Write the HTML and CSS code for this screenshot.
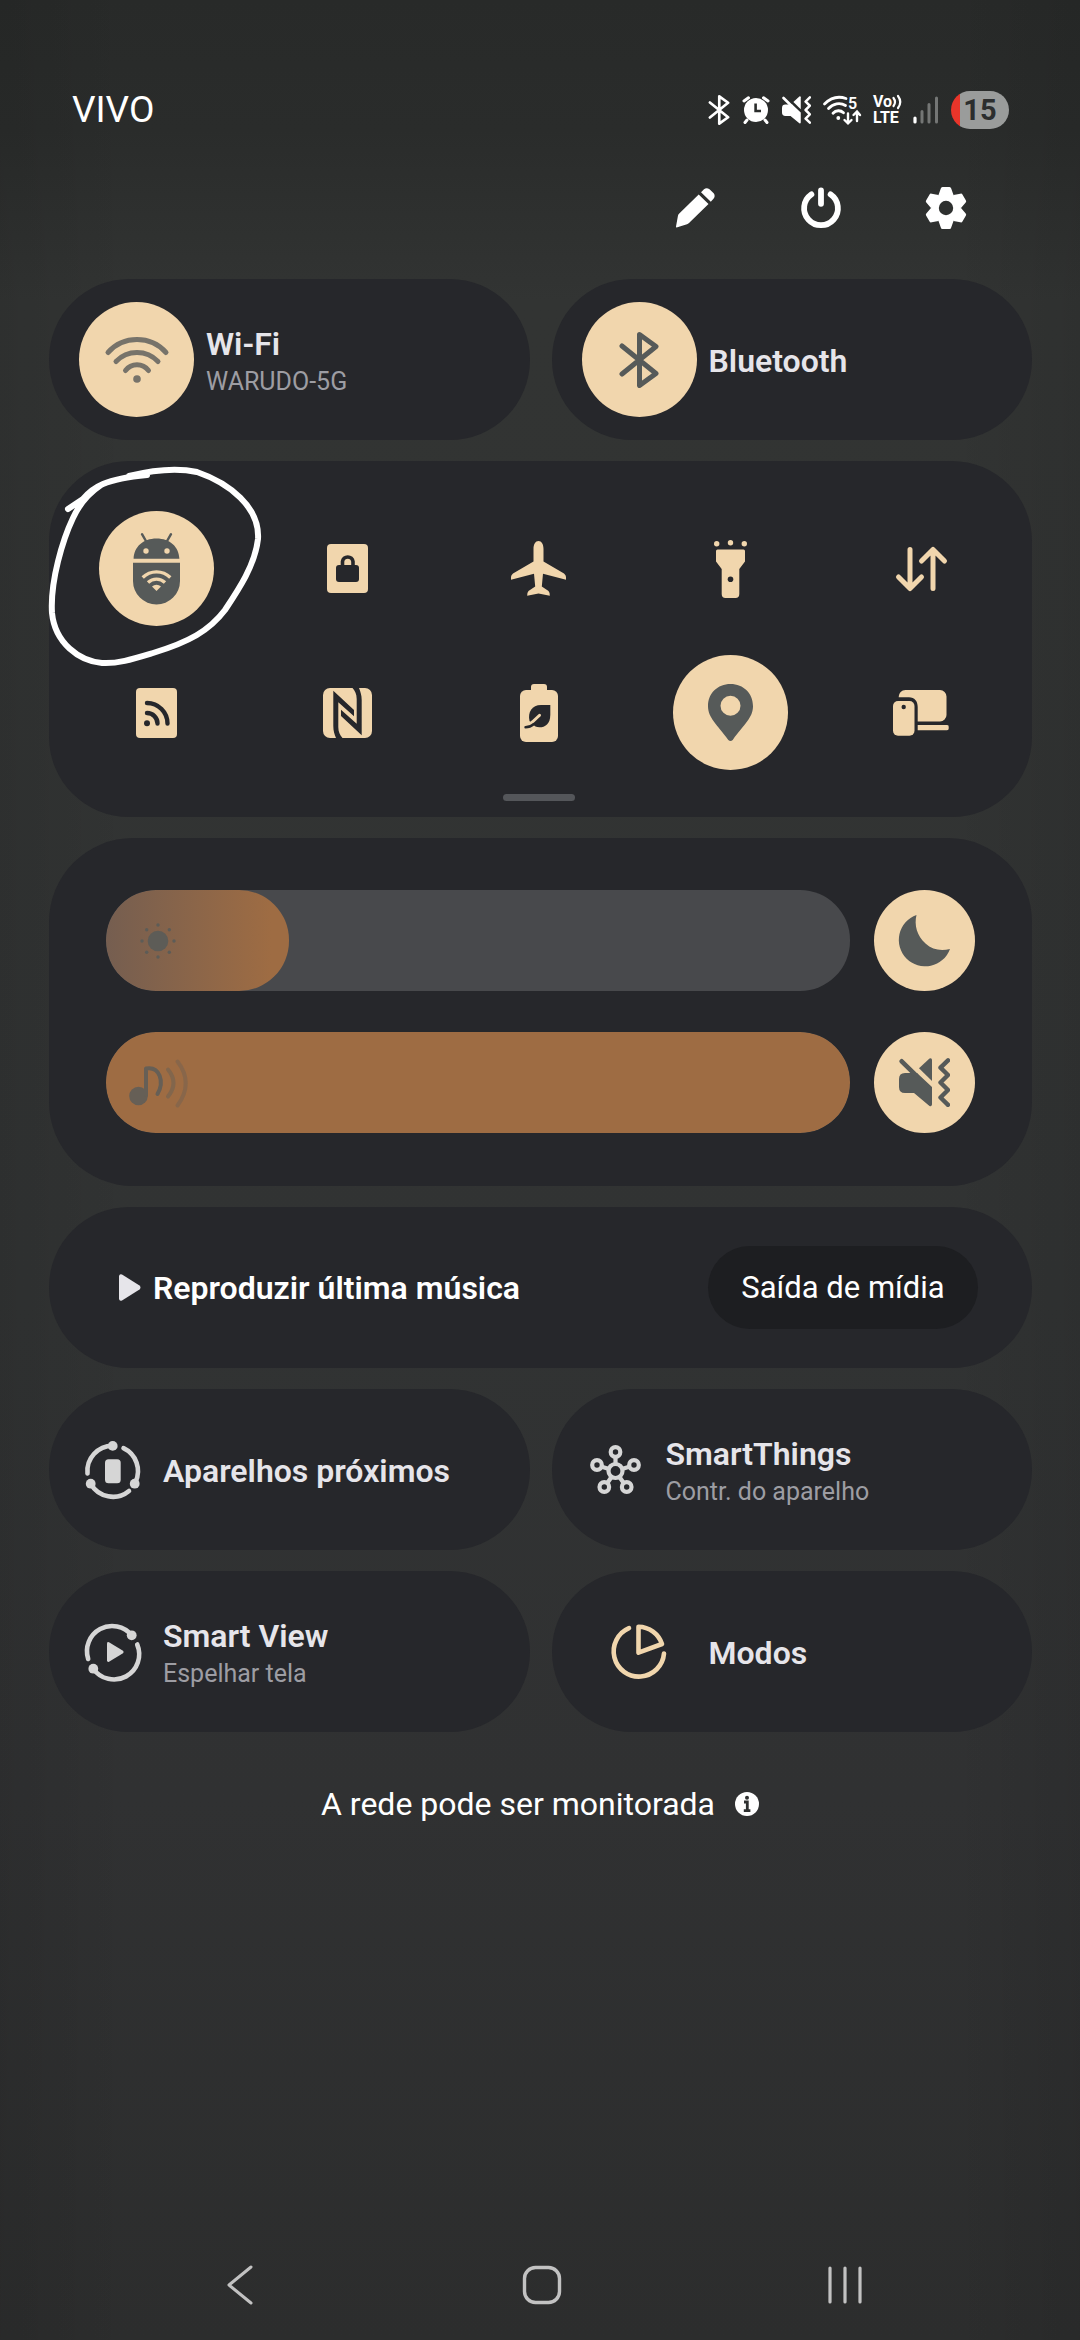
FILE: index.html
```html
<!DOCTYPE html>
<html lang="pt-BR">
<head>
<meta charset="utf-8">
<meta name="viewport" content="width=device-width, initial-scale=1">
<title>Painel rápido</title>
<link rel="stylesheet" href="styles.css">
</head>
<body>
<svg class="defs" aria-hidden="true">
  <symbol id="bluetooth" viewBox="0 0 40 56">
    <path d="M3 14 37 41.500 20.500 53.500V2.500L37 14.500 3 42" fill="none" stroke="currentColor" stroke-width="5" stroke-linecap="round" stroke-linejoin="round"/>
  </symbol>
  <symbol id="mute-vibrate" viewBox="0 0 51 49">
    <path d="M33 29V46.500Q32.600 49 30.500 48L15 35H6Q0 35 0 29V21Q0 15 6 15H18Z" fill="currentColor"/>
    <path d="M20 10.300 30.500.600Q32.800-.400 33 2V23Z" fill="currentColor"/>
    <path d="M2.700 3.300 17 17.400" stroke="currentColor" stroke-width="4.600" stroke-linecap="round"/>
    <path d="M49 2.400 41.500 9.700 49 17 41.500 24.500 49 32 41.500 39.500 49 46.800" fill="none" stroke="currentColor" stroke-width="4.400" stroke-linecap="round" stroke-linejoin="round"/>
  </symbol>
</svg>

<header>
  <div class="status">
    <span class="carrier">VIVO</span>
    <div class="indicators">
      <svg width="22" height="30"><use href="#bluetooth"/></svg>
      <svg width="28" height="28" viewBox="0 0 28 28">
        <circle cx="14" cy="14" r="12" fill="#fff"/>
        <path d="M2 5 6.500 1.800M26 5 21.500 1.800M5 24 3 26.500M23 24 25 26.500" stroke="#fff" stroke-width="3" stroke-linecap="round"/>
        <path d="M13.600 7.500V15H19" fill="none" stroke="#2a2c2b" stroke-width="2.600"/>
      </svg>
      <svg width="29" height="28"><use href="#mute-vibrate"/></svg>
      <svg width="38" height="30" viewBox="0 0 38 30">
        <g fill="none" stroke="#fff" stroke-width="2.800" stroke-linecap="round">
          <path d="M1.500 9C8 2.500 16 1 23 3.500M5.500 13.500C10 8.500 17 7 22.500 10.500M10 18.300C13 15 17.500 15 20.500 17.800"/>
          <path d="M25 18.500V28M21.500 25 25 28.300 28.500 25M34 26V17M30.500 20 34 16.500 37 20" stroke-width="2.400"/>
        </g>
        <circle cx="15.300" cy="23" r="1.900" fill="#fff"/>
        <text class="wifi-gen" x="25" y="14">5</text>
      </svg>
      <span class="volte">
        <span>Vo<svg width="10" height="14" viewBox="0 0 10 14"><path d="M1.500 3Q4.500 7 1.500 11M6 1Q10.500 7 6 13" fill="none" stroke="#fff" stroke-width="2.200" stroke-linecap="round"/></svg></span>
        <span>LTE</span>
      </span>
      <svg width="26" height="28" viewBox="0 0 26 28">
        <path d="M2 22V26" stroke="#fff" stroke-width="3.200" stroke-linecap="round"/>
        <path d="M9 15.500V26M16 8.500V26M23.500 2V26" stroke="#747675" stroke-width="3" stroke-linecap="round"/>
      </svg>
      <span class="battery">15</span>
    </div>
  </div>
  <div class="actions">
    <button aria-label="Editar"><svg width="40" height="40" viewBox="0 0 40 40"><path d="M.600 39.400Q0 39.500 0 38.500L2 27.500Q2.300 26.500 3 25.700L22.700 6.500 32.500 16 13 35Q12 36 11 36.300ZM25 4.300 28 1.300Q30.500-.600 33.500 1.300L37.700 5.300Q39.600 8 37.700 10.500L34.800 13.700Z" fill="#fff"/></svg></button>
    <button aria-label="Desligar"><svg width="42" height="42" viewBox="-21 -21 42 42"><path d="M-9.600-13.600A16.900 16.900 0 1 0 9.600-13.600M0-17.500V-4.200" fill="none" stroke="#fff" stroke-width="5.800" stroke-linecap="round"/></svg></button>
    <button aria-label="Configurações"><svg width="42" height="42" viewBox="-21 -21 42 42">
      <g fill="#fff"><circle r="15"/>
      <path id="tooth" d="M-5.200-19.500Q-4.900-21-3.500-21H3.500Q4.900-21 5.200-19.500L7.500-13H-7.500Z"/>
      <use href="#tooth" transform="rotate(60)"/><use href="#tooth" transform="rotate(120)"/><use href="#tooth" transform="rotate(180)"/><use href="#tooth" transform="rotate(240)"/><use href="#tooth" transform="rotate(300)"/></g>
      <circle r="7.200" fill="#2e302f"/></svg></button>
  </div>
</header>

<main>
  <div class="pair">
    <button class="card">
      <span class="disc"><svg width="64" height="46" viewBox="0 0 64 46"><g fill="none" stroke="#77736a" stroke-width="5" stroke-linecap="round"><path d="M3 15.500A39 39 0 0 1 61 15.500M11 24.500A29 29 0 0 1 53 24.500M20.500 33.500A14.500 14.500 0 0 1 43.500 33.500"/></g><circle cx="32" cy="42" r="3.800" fill="#77736a"/></svg></span>
      <span class="label"><strong>Wi-Fi</strong><small>WARUDO-5G</small></span>
    </button>
    <button class="card">
      <span class="disc"><svg width="40" height="56"><use href="#bluetooth"/></svg></span>
      <span class="label"><strong>Bluetooth</strong></span>
    </button>
  </div>

  <section class="tiles">
    <div class="tile-grid">
      <button class="disc" aria-label="Depuração por Wi-Fi"><svg width="47" height="72" viewBox="0 0 47 72">
        <path d="M9 1.200 13.500 9M38 1.200 33.500 9" stroke="#565a59" stroke-width="2.400" stroke-linecap="round"/>
        <path d="M.600 25.700C1 14 10 5.500 23.500 5.500S46 14 46.400 25.700ZM0 29.700H47V48A23.500 23.500 0 0 1 0 48Z" fill="#565a59"/>
        <g fill="#f1d6ad"><circle cx="13" cy="18" r="2.700"/><circle cx="34" cy="18" r="2.700"/><path d="M23.500 58 19 53.500A6.500 6.500 0 0 1 28 53.500Z"/></g>
        <path d="M9.700 44.500A19.500 19.500 0 0 1 37.300 44.500M15 49.500A12.200 12.200 0 0 1 32 49.500" fill="none" stroke="#f1d6ad" stroke-width="3.300"/></svg></button>
      <button class="tile" aria-label="Bloqueio de rotação"><svg width="41" height="49" viewBox="0 0 41 49">
        <rect width="41" height="49" rx="4" fill="#f1d6ad"/><rect x="9" y="21" width="23" height="17" rx="3" fill="#26272b"/>
        <path d="M15.500 23V17.500A5.300 5.300 0 0 1 26 17.500V23" fill="none" stroke="#26272b" stroke-width="3.600"/></svg></button>
      <button class="tile" aria-label="Modo avião"><svg width="55" height="55" viewBox="0 0 55 55"><path d="M27.500 0C30.500 0 32.500 3 32.500 8V20.500L53 32.500Q55 34 55 36V38.700L32 32.700 30.800 45.500 37.500 50Q39 51.500 38.800 54.700L27.500 52.500 16.200 54.700Q16 51.500 17.500 50L24.200 45.500 23 32.700 0 38.700V36Q0 34 2 32.500L22.500 20.500V8C22.500 3 24.500 0 27.500 0Z" fill="#f1d6ad"/></svg></button>
      <button class="tile" aria-label="Lanterna"><svg width="33" height="58" viewBox="0 0 33 58"><g fill="#f1d6ad"><circle cx="2.700" cy="3.700" r="2.700"/><circle cx="16.500" cy="2.700" r="2.700"/><circle cx="30.300" cy="3.700" r="2.700"/><path d="M3.500 9.500H29.500Q31 9.500 31 11V21.500L25.300 29V54Q25.300 58 21.500 58H11.500Q7.700 58 7.700 54V29L2 21.500V11Q2 9.500 3.500 9.500Z"/></g><circle cx="16.500" cy="39.300" r="2.800" fill="#26272b"/></svg></button>
      <button class="tile" aria-label="Dados móveis"><svg width="51" height="44" viewBox="0 0 51 44"><path d="M14 2.500V41M2.500 30 14 41.500 25.500 30M37 41.500V3M25.500 14 37 2.500 48.500 14" fill="none" stroke="#f1d6ad" stroke-width="5" stroke-linecap="round" stroke-linejoin="round"/></svg></button>
      <button class="tile" aria-label="Roteador Wi-Fi"><svg width="41" height="50" viewBox="0 0 41 50"><rect width="41" height="50" rx="4" fill="#f1d6ad"/><circle cx="11" cy="35.300" r="3" fill="#26272b"/><path d="M11 25A10.500 10.500 0 0 1 21.500 35.500M11 15A20.500 20.500 0 0 1 31.500 35.500" fill="none" stroke="#26272b" stroke-width="4.400" stroke-linecap="round"/></svg></button>
      <button class="tile" aria-label="NFC"><svg width="49" height="50" viewBox="0 0 49 50"><rect width="49" height="50" rx="7" fill="#f1d6ad"/><path d="M10.300 2.700 31 22V28.300L15.300 14.300V39C15.300 44 17 47 19.500 50H13C11.500 46 10.300 43 10.300 38ZM38.700 47.300 18 28V21.700L33.700 35.700V11C33.700 6 32 3 29.500 0H36C37.500 4 38.700 7 38.700 12Z" fill="#26272b"/></svg></button>
      <button class="tile" aria-label="Economia de energia"><svg width="38" height="58" viewBox="0 0 38 58"><rect x="11" width="16" height="12" rx="3" fill="#f1d6ad"/><rect y="6" width="38" height="52" rx="6" fill="#f1d6ad"/><path d="M30.300 21V31C30.300 40 25 43.300 19.500 43.300C16 43.300 14.500 42 13 40.500L9.500 37C7.500 28 12 21 21 21Z" fill="#26272b"/><path d="M7 41.500C12 39.500 15 35 19.500 31.300" fill="none" stroke="#f1d6ad" stroke-width="3" stroke-linecap="round"/><path d="M5.500 43.300C9 43.300 11 42.500 14 40" fill="none" stroke="#26272b" stroke-width="2.400" stroke-linecap="round"/></svg></button>
      <button class="disc" aria-label="Localização"><svg width="45" height="57" viewBox="0 0 45 57"><path fill-rule="evenodd" d="M22.500 0C9.500 0 0 9.500 0 22C0 34 9 40 20.300 56Q22.500 58 24.700 56C36 40 45 34 45 22C45 9.500 35.500 0 22.500 0ZM22.500 11.700A10 10 0 1 1 22.500 31.700A10 10 0 1 1 22.500 11.700Z" fill="#565a59"/></svg></button>
      <button class="tile" aria-label="Multicontrole"><svg width="56" height="46" viewBox="0 0 56 46"><g fill="#f1d6ad"><path d="M5.700 7.200C6 3 8.500 0 12.500 0H47A6.500 6.500 0 0 1 53.500 6.500V25A6.500 6.500 0 0 1 47 31.500H24.700V17C24.700 11 21.500 7.200 16 7.200Z"/><path d="M24.700 35H54A1.700 1.700 0 0 1 55.700 37V38.500A1.700 1.700 0 0 1 54 40.300H24.700Z"/><rect y="11" width="21.500" height="34.700" rx="5"/></g><circle cx="10.700" cy="17" r="2.200" fill="#26272b"/></svg></button>
    </div>
    <span class="handle"></span>
    <svg class="marker" width="216" height="208" viewBox="0 0 216 208" aria-hidden="true"><path d="M19 48 34 38C44 26 56 18 98 14M80 15C104 9 126 6 148 11C180 22 211 46 209 78C206 104 190 128 176 149C160 170 140 181 104 192C84 198 68 203 53 202C30 200 6 182 3 152C1 120 14 78 24 57C30 44 40 32 52 24" fill="none" stroke="#fff" stroke-width="6" stroke-linecap="round" stroke-linejoin="round"/></svg>
  </section>

  <section class="levels">
    <div class="level-row">
      <div class="slider">
        <span class="fill fill-dim" style="width:24.6%"></span>
        <svg class="slider-icon" width="70" height="50" viewBox="0 0 70 50"><g fill="#5d5c57"><circle cx="35" cy="25" r="10.300"/><circle cx="35" cy="9" r="1.700"/><circle cx="35" cy="41" r="1.700"/><circle cx="19" cy="25" r="1.700"/><circle cx="51" cy="25" r="1.700"/><circle cx="23.700" cy="13.700" r="1.700"/><circle cx="46.300" cy="13.700" r="1.700"/><circle cx="23.700" cy="36.300" r="1.700"/><circle cx="46.300" cy="36.300" r="1.700"/></g></svg>
        <input type="range" min="0" max="100" value="25" aria-label="Brilho">
      </div>
      <button class="disc small" aria-label="Modo escuro"><svg width="51" height="52" viewBox="0 0 51 52"><path d="M17.500 0A26.400 26.400 0 1 0 51 34C42 36 33.500 35 26.500 28.500C18 21 15 10 17.500 0Z" fill="#565a59"/></svg></button>
    </div>
    <div class="level-row">
      <div class="slider">
        <span class="fill" style="width:100%"></span>
        <svg class="slider-icon" width="70" height="50" viewBox="0 0 70 50"><circle cx="15.500" cy="38" r="9.300" fill="#665f56"/><g fill="none" stroke="#665f56" stroke-width="4" stroke-linecap="round" stroke-linejoin="round"><path d="M23 37V10.500C37 8 41.500 24 34.500 36"/><path d="M45 11.500Q56 25 45 38.500" opacity=".5"/><path d="M54.500 3.500Q71 25 54.500 47.500" opacity=".4"/></g></svg>
        <input type="range" min="0" max="100" value="100" aria-label="Volume">
      </div>
      <button class="disc small" aria-label="Som"><svg width="51" height="49"><use href="#mute-vibrate"/></svg></button>
    </div>
  </section>

  <section class="card media">
    <button class="play"><svg width="22" height="27" viewBox="0 0 22 27"><path d="M0 2Q.500-.600 3 .500L20.500 11.500Q22.500 13.500 20.500 15.500L3 26.500Q.500 27.600 0 25Z" fill="#e6e5ea"/></svg><strong>Reproduzir última música</strong></button>
    <button class="output">Saída de mídia</button>
  </section>

  <div class="pair">
    <button class="card">
      <span class="glyph"><svg width="56" height="58" viewBox="0 0 56 58"><g fill="none" stroke="#d6d6d6" stroke-width="4.600" stroke-linecap="round"><path d="M27.700 4.700A25.300 25.300 0 0 0 2.500 32.500M38.500 7.200A25.300 25.300 0 0 1 50.500 41M44 50A25.300 25.300 0 0 1 5.700 42.700"/></g><g fill="#d6d6d6"><circle cx="27.700" cy="4.900" r="4.900"/><circle cx="5.700" cy="42.700" r="4.900"/><circle cx="49.700" cy="42.700" r="4.900"/><rect x="20" y="18.300" width="15.700" height="24" rx="3.500"/></g></svg></span>
      <span class="label"><strong>Aparelhos próximos</strong></span>
    </button>
    <button class="card">
      <span class="glyph"><svg width="51" height="49" viewBox="0 0 51 49"><g fill="none" stroke="#d6d6d6" stroke-width="4.200"><circle cx="25.500" cy="26" r="7"/><circle cx="25.500" cy="7" r="4.800"/><circle cx="7" cy="20" r="4.800"/><circle cx="44" cy="20" r="4.800"/><circle cx="14.300" cy="42" r="4.800"/><circle cx="36.700" cy="42" r="4.800"/><path d="M25.500 11V19M11 21.500 19 24M40 21.500 32 24M17 38.500 21.500 32M34 38.500 29.500 32"/></g></svg></span>
      <span class="label"><strong>SmartThings</strong><small>Contr. do aparelho</small></span>
    </button>
  </div>
  <div class="pair">
    <button class="card">
      <span class="glyph"><svg width="56" height="56" viewBox="0 0 56 56"><g fill="none" stroke="#d6d6d6" stroke-width="4.600" stroke-linecap="round"><path d="M3.200 35A25.200 25.200 0 0 1 46.700 11.300M8.300 44.700A25.200 25.200 0 0 0 52.200 20.500"/></g><g fill="#d6d6d6"><circle cx="46.700" cy="11.300" r="4.900"/><circle cx="8.300" cy="44.700" r="4.900"/><path d="M22 19.500Q22.200 17.500 24 18.300L38 26.800Q39.400 28 38 29.200L24 37.700Q22.200 38.500 22 36.500Z"/></g></svg></span>
      <span class="label"><strong>Smart View</strong><small>Espelhar tela</small></span>
    </button>
    <button class="card">
      <span class="disc plain"><svg width="56" height="56" viewBox="0 0 56 56"><path d="M18 4.200A25.200 25.200 0 1 0 53 29.500M27.500 2.700A25 25 0 0 1 51 20L27.500 28.700Z" fill="none" stroke="#f1d6ad" stroke-width="4.600" stroke-linecap="round" stroke-linejoin="round"/></svg></span>
      <span class="label"><strong>Modos</strong></span>
    </button>
  </div>
</main>

<a class="notice" href="#">A rede pode ser monitorada
  <svg width="24" height="24" viewBox="0 0 24 24"><circle cx="12" cy="12" r="12" fill="#fff"/><circle cx="12" cy="5.800" r="2" fill="#2f3131"/><path d="M9 10H12.300V18.500M8.800 18.700H15.400" fill="none" stroke="#2f3131" stroke-width="2.800"/></svg></a>

<nav>
  <button aria-label="Voltar"><svg width="26" height="40" viewBox="0 0 26 40"><path d="M24 2 2 20 24 38" fill="none" stroke="#c2c2c2" stroke-width="3" stroke-linecap="round" stroke-linejoin="round"/></svg></button>
  <button aria-label="Início"><svg width="40" height="40" viewBox="0 0 40 40"><rect x="2.500" y="2.500" width="35" height="35" rx="11" fill="none" stroke="#c2c2c2" stroke-width="3.400"/></svg></button>
  <button aria-label="Recentes"><svg width="36" height="38" viewBox="0 0 36 38"><path d="M3 2V36M18 2V36M33 2V36" stroke="#c2c2c2" stroke-width="3.200" stroke-linecap="round"/></svg></button>
</nav>
</body>
</html>
```
FILE: styles.css
```css
* {
  box-sizing: border-box;
}

body {
  margin: 0;
  min-height: 100vh;
  display: flex;
  flex-direction: column;
  font-family: Roboto, "Liberation Sans", sans-serif;
  color: #fff;
  background: linear-gradient(90deg, #00000014, #0000 12%, #0000 88%, #00000014),
    linear-gradient(#282a29 0, #2a2c2b 130px, #323433 300px, #313333 1300px, #303132 1800px, #2c2d2d 2340px);
}

button {
  margin: 0;
  padding: 0;
  border: 0;
  background: none;
  color: inherit;
  font: inherit;
  text-align: left;
}

svg {
  display: block;
  flex: none;
  overflow: visible;
}

.defs {
  position: absolute;
  width: 0;
  height: 0;
}

.status {
  display: flex;
  align-items: center;
  justify-content: space-between;
  padding: 90px 71px 0 72px;
}

.carrier {
  font-size: 37px;
  line-height: 40px;
}

.indicators {
  display: flex;
  align-items: center;
  gap: 12px;
}

.wifi-gen {
  fill: #fff;
  font-size: 16px;
  font-weight: 600;
}

.volte {
  display: grid;
  width: 28px;
  font-size: 16px;
  font-weight: 700;
  line-height: 16px;
}

.volte span {
  display: flex;
  align-items: center;
}

.battery {
  width: 58px;
  height: 38px;
  border-radius: 19px;
  background: linear-gradient(90deg, #e8352a 9px, #9a9c9b 9px);
  color: #2c2e2e;
  font-size: 29px;
  font-weight: 700;
  line-height: 38px;
  text-align: center;
}

.actions {
  display: flex;
  justify-content: flex-end;
  gap: 83px;
  padding: 57px 113px 50px 0;
}

.actions button {
  display: grid;
  place-items: center;
  width: 42px;
  height: 42px;
}

main {
  display: grid;
  gap: 21px;
  padding: 0 48px 0 49px;
}

.pair {
  display: grid;
  grid-template-columns: 1fr 1fr;
  gap: 22px;
}

.card {
  display: flex;
  align-items: center;
  height: 161px;
  padding: 0 30px;
  border-radius: 80px;
  background: #26272b;
}

.disc {
  display: grid;
  place-items: center;
  flex: none;
  width: 115px;
  height: 115px;
  border-radius: 50%;
  background: #f1d6ad;
  color: #565a59;
}

.disc.small {
  width: 101px;
  height: 101px;
}

.disc.plain {
  background: none;
}

.disc + .label {
  padding-left: 12px;
}

.glyph {
  display: grid;
  place-items: center;
  width: 68px;
}

.glyph + .label {
  padding-left: 16px;
}

.label {
  display: grid;
  padding-top: 2px;
}

strong {
  color: #e6e5ea;
  font-size: 32px;
  font-weight: 600;
  line-height: 42px;
}

small {
  color: #9d9da3;
  font-size: 25px;
  line-height: 34px;
}

.tiles {
  position: relative;
  padding: 50px 15px 16px 12px;
  border-radius: 80px;
  background: #26272b;
}

.tile-grid {
  display: grid;
  grid-template-columns: repeat(5, 1fr);
  row-gap: 29px;
  justify-items: center;
}

.tile {
  display: grid;
  place-items: center;
  width: 115px;
  height: 115px;
}

.handle {
  display: block;
  width: 72px;
  height: 7px;
  margin: 24px auto 0;
  border-radius: 4px;
  background: #54565a;
}

.marker {
  position: absolute;
  top: 0;
  left: 0;
}

.levels {
  display: grid;
  gap: 41px;
  padding: 52px 57px 53px;
  border-radius: 84px;
  background: #26272b;
}

.level-row {
  display: flex;
  gap: 24px;
}

.slider {
  display: grid;
  flex: 1;
  align-items: center;
  border-radius: 50px;
  overflow: hidden;
  background: #48494c;
}

.slider > * {
  grid-area: 1 / 1;
}

.fill {
  height: 100%;
  border-radius: 50px;
  background: #9e6c43;
}

.fill-dim {
  background: linear-gradient(90deg, #755e50, #9e6c43 90%);
}

.slider-icon {
  margin-left: 17px;
}

.slider input {
  appearance: none;
  width: 100%;
  height: 100%;
  margin: 0;
  background: none;
}

.slider input::-webkit-slider-thumb {
  appearance: none;
  width: 1px;
  height: 100px;
}

.media {
  justify-content: space-between;
  padding: 0 54px 0 70px;
}

.play {
  display: flex;
  align-items: center;
  gap: 12px;
}

.play strong {
  color: #fff;
}

.output {
  width: 270px;
  height: 83px;
  border-radius: 42px;
  background: #1d1e21;
  font-size: 31px;
  text-align: center;
}

.notice {
  display: flex;
  align-items: center;
  justify-content: center;
  gap: 20px;
  margin-top: 51px;
  color: #fff;
  font-size: 32px;
  line-height: 42px;
  text-decoration: none;
}

nav {
  display: grid;
  grid-template-columns: repeat(3, 1fr);
  height: 110px;
  margin-top: auto;
  padding: 0 84px 0 89px;
}

nav button {
  display: grid;
  place-items: center;
}
```
